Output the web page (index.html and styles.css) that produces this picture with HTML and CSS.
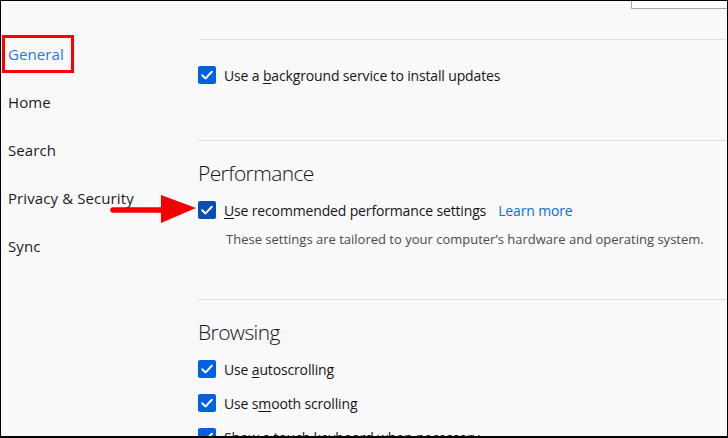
FILE: index.html
```html
<!DOCTYPE html>
<html lang="en">
<head>
<meta charset="utf-8">
<title>Options</title>
<link rel="stylesheet" href="styles.css">
</head>
<body>
<div class="frame">
  <nav class="sidebar">
    <div class="cat cat-selected"><span class="mark">General</span></div>
    <div class="cat">Home</div>
    <div class="cat">Search</div>
    <div class="cat">Privacy &amp; Security</div>
    <div class="cat">Sync</div>
  </nav>
  <main class="main">
    <div class="searchrow"><div class="searchbox"></div></div>
    <div class="rule rule-first"></div>
    <div class="row row-first">
      <span class="cb"><svg viewBox="0 0 18 18" width="18" height="18"><path d="M4.2 9.2 L7.6 12.4 L13.8 5.8" fill="none" stroke="#fff" stroke-width="2" stroke-linecap="round" stroke-linejoin="round"/></svg></span>
      <span class="label">Use a <u>b</u>ackground service to install updates</span>
    </div>
    <div class="rule rule-sec"></div>
    <h2 class="heading">Performance</h2>
    <div class="row">
      <span class="cb cb-dark"><svg viewBox="0 0 18 18" width="18" height="18"><path d="M4.2 9.2 L7.6 12.4 L13.8 5.8" fill="none" stroke="#fff" stroke-width="2" stroke-linecap="round" stroke-linejoin="round"/></svg></span>
      <span class="label"><u>U</u>se recommended performance settings</span>
      <span class="link">Learn more</span>
    </div>
    <p class="desc">These settings are tailored to your computer’s hardware and operating system.</p>
    <div class="rule rule-sec2"></div>
    <h2 class="heading">Browsing</h2>
    <div class="row">
      <span class="cb"><svg viewBox="0 0 18 18" width="18" height="18"><path d="M4.2 9.2 L7.6 12.4 L13.8 5.8" fill="none" stroke="#fff" stroke-width="2" stroke-linecap="round" stroke-linejoin="round"/></svg></span>
      <span class="label">Use <u>a</u>utoscrolling</span>
    </div>
    <div class="row">
      <span class="cb"><svg viewBox="0 0 18 18" width="18" height="18"><path d="M4.2 9.2 L7.6 12.4 L13.8 5.8" fill="none" stroke="#fff" stroke-width="2" stroke-linecap="round" stroke-linejoin="round"/></svg></span>
      <span class="label">Use s<u>m</u>ooth scrolling</span>
    </div>
    <div class="row">
      <span class="cb"><svg viewBox="0 0 18 18" width="18" height="18"><path d="M4.2 9.2 L7.6 12.4 L13.8 5.8" fill="none" stroke="#fff" stroke-width="2" stroke-linecap="round" stroke-linejoin="round"/></svg></span>
      <span class="label">Show a touch keyboard when necessary</span>
    </div>
  </main>
  <svg class="arrow" width="90" height="30" viewBox="0 0 90 30">
    <line x1="3" y1="15" x2="56" y2="15" stroke="#f20000" stroke-width="5.5" stroke-linecap="round"/>
    <polygon points="51,0 51,28 86,13" fill="#f20000"/>
  </svg>
</div>
</body>
</html>
```
FILE: styles.css
```css
* { box-sizing: border-box; }
html, body { margin: 0; padding: 0; }
body {
  width: 728px;
  height: 438px;
  overflow: hidden;
  background: #f9f9fa;
  font-family: "Open Sans", "Noto Sans", sans-serif;
  color: #0c0c0d;
}
.frame {
  position: relative;
  width: 728px;
  height: 438px;
  border-top: 1px solid #000;
  border-left: 1px solid #000;
  border-right: 1px solid #000;
  border-bottom: 2px solid #000;
  display: flex;
  overflow: hidden;
}
.sidebar {
  width: 197px;
  flex: none;
  padding-top: 29px;
  display: flex;
  flex-direction: column;
}
.sidebar > * { flex: none; }
.cat {
  height: 48px;
  display: flex;
  align-items: center;
  padding-left: 7px;
  font-size: 15px;
  letter-spacing: 0.1px;
  color: #1b1b1d;
}
.cat-selected { padding-left: 1px; }
.mark {
  height: 38px;
  display: flex;
  align-items: center;
  border: 3px solid #ff0000;
  padding: 0 7px 0 3px;
  color: #1f7ae6;
}
.main {
  flex: 1;
  display: flex;
  flex-direction: column;
  overflow: hidden;
}
.main > * { flex: none; }
.searchrow {
  display: flex;
  justify-content: flex-end;
}
.searchbox {
  width: 96px;
  height: 8px;
  background: #fff;
  border-left: 1px solid #a8a8a8;
  border-bottom: 1px solid #a8a8a8;
}
.rule {
  height: 1px;
  background: #e0e0e2;
}
.rule-first { margin: 30px 0 0 2px; }
.rule-sec { margin-top: 48px; }
.rule-sec2 { margin-top: 50px; }
.row {
  height: 34px;
  display: flex;
  align-items: center;
  gap: 8px;
  font-size: 14px;
  letter-spacing: -0.15px;
}
.row-first { margin-top: 18px; }
.cb {
  width: 18px;
  height: 18px;
  flex: none;
  border-radius: 2px;
  background: #0061e0;
  display: flex;
}
.cb-dark { background: #0a4fb5; }
.label { color: #15141a; }
.label u { text-underline-offset: 2px; }
.link {
  margin-left: 4px;
  color: #0a6de0;
}
.heading {
  margin: 17px 0 5px 0;
  font-size: 21px;
  font-weight: 300;
  line-height: 30px;
  color: #15141a;
  letter-spacing: -0.6px;
}
.desc {
  margin: 2px 0 0 28px;
  font-size: 13px;
  line-height: 20px;
  letter-spacing: 0;
  color: #4a4a4f;
}
.arrow {
  position: absolute;
  left: 109px;
  top: 194px;
}
```
